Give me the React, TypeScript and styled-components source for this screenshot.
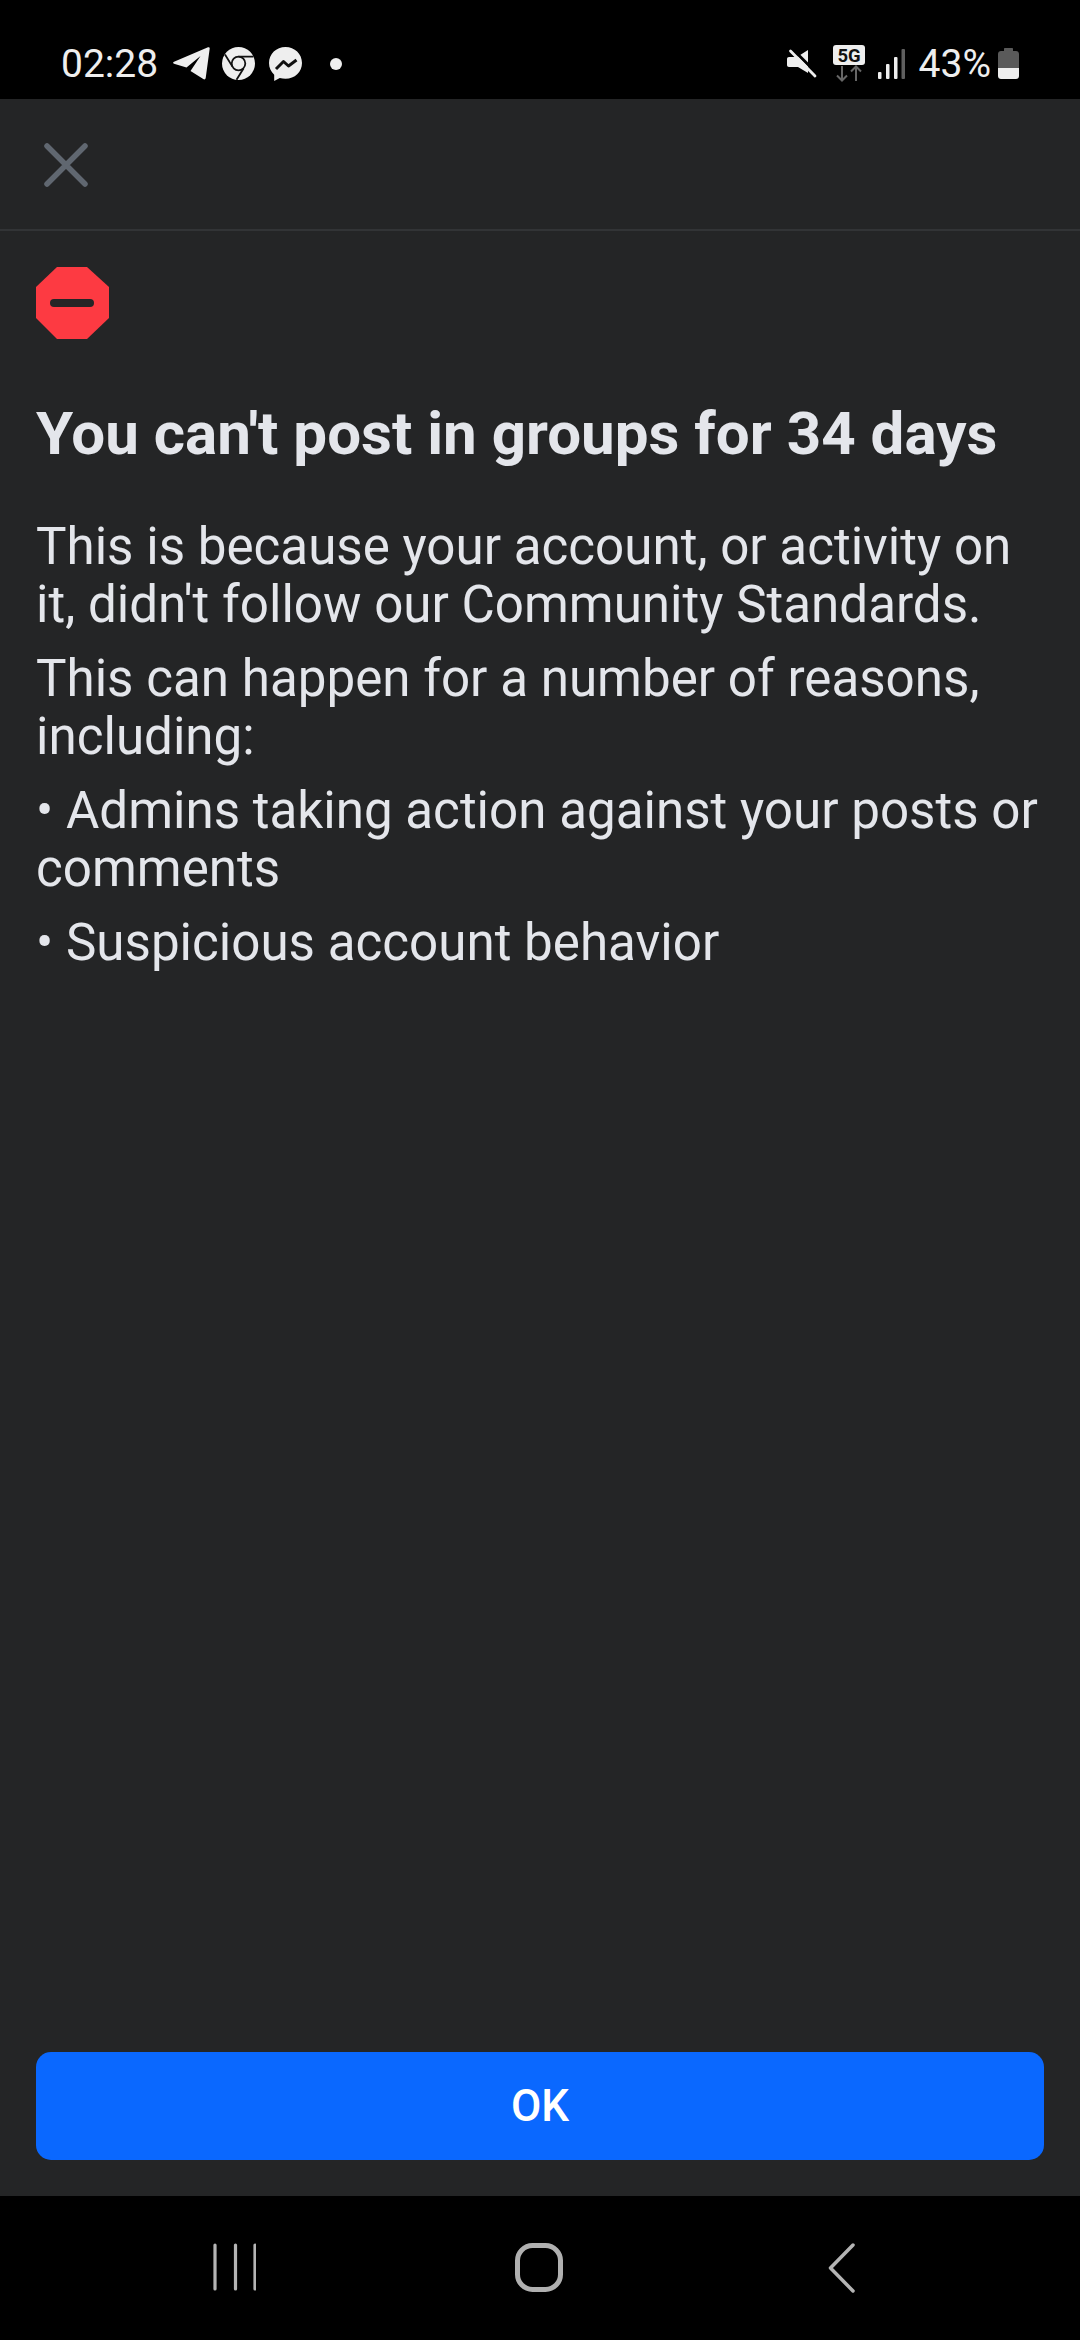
import React from 'react'
import styled, { createGlobalStyle } from 'styled-components'

const GlobalStyle = createGlobalStyle`
  html, body {
    margin: 0;
    padding: 0;
    background: #000;
  }
  * {
    box-sizing: border-box;
  }
`

const Screen = styled.div`
  width: 1080px;
  height: 2340px;
  display: flex;
  flex-direction: column;
  background: #242526;
  font-family: Roboto, "Liberation Sans", sans-serif;
  overflow: hidden;
`

const StatusBar = styled.div`
  height: 99px;
  flex: none;
  background: #000;
  color: #eee;
  display: flex;
  align-items: center;
  justify-content: space-between;
  padding: 28px 61px 0 61px;
`

const StatusGroup = styled.div`
  display: flex;
  align-items: center;
  height: 40px;
`

const Clock = styled.span`
  font-size: 39px;
  line-height: 40px;
  margin-right: 15px;
`

const Percent = styled.span`
  font-size: 39px;
  line-height: 40px;
  margin: 0 7px 0 14px;
`

const StatusIcon = styled.svg<{ $gap?: number }>`
  display: block;
  flex: none;
  margin-right: ${({ $gap }) => $gap ?? 0}px;
`

const Toolbar = styled.div`
  height: 132px;
  flex: none;
  display: flex;
  align-items: center;
  padding: 8px 0 6px 43px;
  border-bottom: 2px solid #323436;
`

const Content = styled.div`
  flex: 1;
  padding: 36px 36px 0;
`

const Title = styled.h1`
  margin: 59px 0 48px;
  font-size: 60.1px;
  line-height: 72px;
  font-weight: 700;
  white-space: nowrap;
  color: #e4e6eb;
`

const Paragraph = styled.p`
  margin: 0 0 16px;
  font-size: 51.15px;
  line-height: 58px;
  font-weight: 400;
  color: #e4e6eb;
`

const Footer = styled.div`
  flex: none;
  padding: 0 36px 36px;
`

const OkButton = styled.button`
  display: block;
  width: 100%;
  height: 108px;
  border: none;
  border-radius: 15px;
  background: #0a68ff;
  color: #fff;
  font-family: inherit;
  font-size: 44px;
  font-weight: 500;
`

const NavBar = styled.div`
  height: 144px;
  flex: none;
  background: #000;
  display: grid;
  grid-template-columns: 303px 313px 30px;
  align-items: start;
  padding: 47px 0 0 212px;
`

const TelegramIcon = () => (
  <StatusIcon width="37" height="33" viewBox="0 0 37 33" $gap={12}>
    <path
      d="M35 .300c1-.4 1.800.3 1.700 1.300l-4 29.400c-.2 1.300-1.300 1.800-2.400 1.100L17.500 24 27.500 9 13.500 20.500 1 16.800c-1.200-.4-1.200-1.500 0-2z"
      fill="#eee"
    />
  </StatusIcon>
)

const ChromeIcon = () => (
  <StatusIcon width="33" height="33" viewBox="0 0 33 33" $gap={14}>
    <circle cx="16.500" cy="16.500" r="16.500" fill="#eee" />
    <circle cx="16.500" cy="16.500" r="6.800" fill="none" stroke="#111" strokeWidth="1.800" />
    <path d="M16.500 9.700H31.500M10.600 19.900 3 7.500M21.500 21.500 14.500 32.800" stroke="#111" strokeWidth="1.800" fill="none" />
  </StatusIcon>
)

const MessengerIcon = () => (
  <StatusIcon width="33" height="34" viewBox="0 0 33 34" $gap={28}>
    <path
      d="M16.500 0C7.300 0 0 6.900 0 16c0 4.700 2 8.800 5.200 11.700V34l5.600-3c1.800.5 3.700.7 5.700.7 9.200 0 16.500-6.800 16.500-15.800S25.700 0 16.500 0z"
      fill="#eee"
    />
    <path d="M7 22l7.500-7.500 5 4.500 8-6" fill="none" stroke="#111" strokeWidth="3" strokeLinejoin="round" />
  </StatusIcon>
)

const NotificationDot = () => (
  <StatusIcon width="12" height="12" viewBox="0 0 12 12">
    <circle cx="6" cy="6" r="6" fill="#eee" />
  </StatusIcon>
)

const MuteIcon = () => (
  <StatusIcon width="30" height="30" viewBox="0 0 30 30" $gap={16}>
    <path d="M21 1v23l-10-6H2c-1.200 0-2-.8-2-2V10c0-1.200.8-2 2-2h8z" fill="#eee" />
    <path d="M5.500 0 30 24.500" stroke="#000" strokeWidth="3" />
    <path d="M3.500 2 28 27" stroke="#eee" strokeWidth="2.800" strokeLinecap="round" />
  </StatusIcon>
)

const NetworkIcon = () => (
  <StatusIcon width="32" height="38" viewBox="0 0 32 38" $gap={13}>
    <rect width="32" height="20" rx="3" fill="#eee" />
    <text
      x="16"
      y="16.800"
      textAnchor="middle"
      fontFamily="Roboto, sans-serif"
      fontWeight="700"
      fontSize="18.500"
      fill="#111"
    >
      5G
    </text>
    <path d="M9 21v14.500M4 30.500l5 5 5-5" stroke="#666" strokeWidth="2" fill="none" />
    <path d="M23 36V21.500M18 26.500l5-5 5 5" stroke="#666" strokeWidth="2" fill="none" />
  </StatusIcon>
)

const SignalIcon = () => (
  <StatusIcon width="27" height="30" viewBox="0 0 27 30">
    <rect x="0" y="23" width="3.500" height="7" rx="1" fill="#eee" />
    <rect x="8" y="15" width="3.500" height="15" rx="1" fill="#eee" />
    <rect x="16" y="8" width="3.500" height="22" rx="1" fill="#eee" />
    <rect x="23.500" y="0" width="3.500" height="30" rx="1" fill="#5f5f5f" />
  </StatusIcon>
)

const BatteryIcon = () => (
  <StatusIcon width="21" height="31" viewBox="0 0 21 31">
    <path d="M6 1c0-.6.400-1 1-1h7c.6 0 1 .4 1 1v2h3c1.700 0 3 1.300 3 3v14H0V6c0-1.700 1.300-3 3-3h3z" fill="#5a5a5a" />
    <path d="M0 20h21v8c0 1.700-1.300 3-3 3H3c-1.700 0-3-1.300-3-3z" fill="#eee" />
  </StatusIcon>
)

const CloseIcon = () => (
  <svg width="46" height="46" viewBox="0 0 46 46">
    <path d="M4 4l38 38M42 4 4 42" stroke="#606770" strokeWidth="5.500" strokeLinecap="round" />
  </svg>
)

const BlockIcon = () => (
  <svg width="73" height="72" viewBox="0 0 73 72" style={{ display: 'block' }}>
    <path d="M21 0h30l22 20v31L51 72H21L0 51V20z" fill="#fd3a42" />
    <rect x="14" y="32" width="44" height="8" rx="4" fill="#242526" />
  </svg>
)

const RecentsIcon = () => (
  <svg width="44" height="48" viewBox="0 0 44 48">
    <path d="M3 2v44M23.500 2v44M43 2v44" stroke="#b4b4b4" strokeWidth="3.200" strokeLinecap="round" />
  </svg>
)

const HomeIcon = () => (
  <svg width="48" height="49" viewBox="0 0 48 49">
    <rect x="2.500" y="2.500" width="43" height="44" rx="15" fill="none" stroke="#b0b0b0" strokeWidth="5" />
  </svg>
)

const BackIcon = () => (
  <svg width="30" height="50" viewBox="0 0 30 50">
    <path d="M25 2 2.500 25 25 48" fill="none" stroke="#b4b4b4" strokeWidth="3.500" strokeLinecap="round" strokeLinejoin="round" />
  </svg>
)

export default function App() {
  return (
    <Screen>
      <GlobalStyle />
      <StatusBar>
        <StatusGroup>
          <Clock>02:28</Clock>
          <TelegramIcon />
          <ChromeIcon />
          <MessengerIcon />
          <NotificationDot />
        </StatusGroup>
        <StatusGroup>
          <MuteIcon />
          <NetworkIcon />
          <SignalIcon />
          <Percent>43%</Percent>
          <BatteryIcon />
        </StatusGroup>
      </StatusBar>
      <Toolbar>
        <CloseIcon />
      </Toolbar>
      <Content>
        <BlockIcon />
        <Title>You can't post in groups for 34 days</Title>
        <Paragraph>
          This is because your account, or activity on it, didn't follow our Community Standards.
        </Paragraph>
        <Paragraph>This can happen for a number of reasons, including:</Paragraph>
        <Paragraph>• Admins taking action against your posts or comments</Paragraph>
        <Paragraph>• Suspicious account behavior</Paragraph>
      </Content>
      <Footer>
        <OkButton>OK</OkButton>
      </Footer>
      <NavBar>
        <RecentsIcon />
        <HomeIcon />
        <BackIcon />
      </NavBar>
    </Screen>
  )
}
